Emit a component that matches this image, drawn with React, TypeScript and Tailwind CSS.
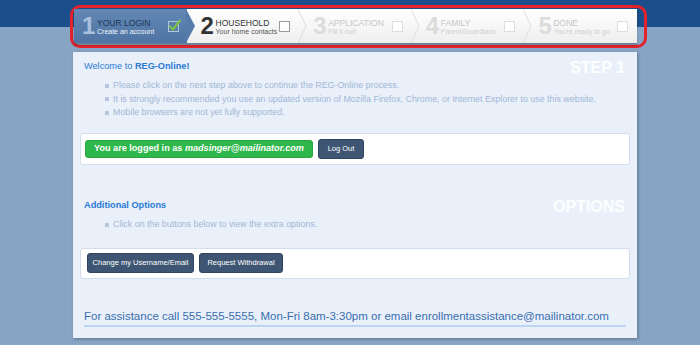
import React from 'react';

type Step = { n: string; title: string; sub: string; state: 'done' | 'current' | 'todo' };

const steps: Step[] = [
  { n: '1', title: 'YOUR LOGIN', sub: 'Create an account', state: 'done' },
  { n: '2', title: 'HOUSEHOLD', sub: 'Your home contacts', state: 'current' },
  { n: '3', title: 'APPLICATION', sub: 'Fill it out!', state: 'todo' },
  { n: '4', title: 'FAMILY', sub: 'Parent/Guardians', state: 'todo' },
  { n: '5', title: 'DONE', sub: "You're ready to go", state: 'todo' },
];

const CheckBox: React.FC<{ state: Step['state'] }> = ({ state }) => {
  if (state === 'done') {
    return (
      <svg width="14" height="14" viewBox="0 0 14 14" className="shrink-0 mr-[-3px]">
        <rect x="1.5" y="2.5" width="10" height="10" fill="none" stroke="#b7c7db" strokeWidth="1" />
        <path d="M3 7.5 L6 10.5 L13 1.5" fill="none" stroke="#7cc242" strokeWidth="2.2" strokeLinecap="round" strokeLinejoin="round" />
      </svg>
    );
  }
  return (
    <div
      className={`w-[11px] h-[11px] shrink-0 border bg-white ${
        state === 'current' ? 'border-[#9a9a9a]' : 'border-[#dedede]'
      }`}
    />
  );
};

const StepItem: React.FC<{ step: Step; first: boolean; last: boolean }> = ({ step, first, last }) => {
  const done = step.state === 'done';
  const todo = step.state === 'todo';
  return (
    <div
      className={`relative w-[112.6px] shrink-0 flex items-center h-full ${first ? 'pl-[8px] z-10' : 'pl-[14px]'} pr-[9px] ${
        done ? 'bg-[linear-gradient(to_bottom,#6388b5,#4f74a3)]' : ''
      }`}
    >
      <span
        className={`text-[24px] leading-none font-bold w-[15px] shrink-0 ${
          done ? 'text-[#a9c1df]' : todo ? 'text-[#dcdcdc]' : 'text-[#333333]'
        }`}
      >
        {step.n}
      </span>
      <div className="flex flex-col flex-1 min-w-0 pt-[1px]">
        <span
          className={`text-[8.5px] leading-[10px] whitespace-nowrap ${
            done ? 'text-[#1c3657]' : todo ? 'text-[#c6c6c6]' : 'text-[#333333]'
          }`}
        >
          {step.title}
        </span>
        <span
          className={`text-[7px] leading-[8px] whitespace-nowrap ${
            done ? 'text-[#eef3fa]' : todo ? 'text-[#cfcfcf]' : 'text-[#555555]'
          }`}
        >
          {step.sub}
        </span>
      </div>
      <CheckBox state={step.state} />
      {!last && (
        <svg
          width="10"
          height="34"
          viewBox="0 0 10 34"
          className="absolute top-0 right-[-9px] pointer-events-none"
        >
          {done ? (
            <path d="M0 0 L9 17 L0 34 Z" fill="#567bab" />
          ) : (
            <path d="M0 0 L8 17 L0 34" fill="none" stroke="#dcdcdc" strokeWidth="1" />
          )}
        </svg>
      )}
    </div>
  );
};

const Bullet: React.FC<{ children: React.ReactNode }> = ({ children }) => (
  <li className="flex items-center h-[13.5px]">
    <span className="w-[4px] h-[4px] bg-[#b4c5de] mr-[4px] shrink-0" />
    <span className="whitespace-nowrap">{children}</span>
  </li>
);

const DarkButton: React.FC<{ children: React.ReactNode; w: string }> = ({ children, w }) => (
  <button
    className={`${w} h-[20px] rounded-[3px] bg-[#3e5674] border border-[#2f445e] text-[7.5px] text-white flex items-center justify-center`}
  >
    {children}
  </button>
);

export default function App() {
  return (
    <div className="w-[700px] h-[345px] overflow-hidden bg-[linear-gradient(to_bottom,#1c4e8b_27px,#88a4c4_27px)] pt-[5px] font-['Liberation_Sans',Arial,sans-serif]">
      {/* step bar with red outline */}
      <div className="ml-[70px] w-[577px] h-[43px] border-[3px] border-[#e3222b] rounded-[10px] pt-[1px] pl-[1px]">
        <div className="w-[563px] h-[34px] flex bg-[linear-gradient(to_bottom,#ffffff,#eeeeee)] shadow-[0_2px_2px_rgba(0,0,0,0.25)]">
          {steps.map((s, i) => (
            <StepItem key={s.n} step={s} first={i === 0} last={i === steps.length - 1} />
          ))}
        </div>
      </div>

      {/* content panel */}
      <div className="mt-[4px] ml-[73px] w-[564px] h-[286px] bg-[#e9f0fa] shadow-[1px_1px_3px_rgba(0,0,0,0.3)] px-[7px] pt-[7px] flex flex-col">
        <div className="h-[18px] flex items-center justify-between pl-[4px] pr-[5px]">
          <div className="text-[9.2px] leading-[12px] text-[#2a7ad2] mb-[4px]">
            Welcome to <span className="font-bold">REG-Online!</span>
          </div>
          <div className="text-[16px] leading-[18px] font-bold text-white/90">STEP 1</div>
        </div>
        <ul className="pl-[25px] mt-[2px] text-[8.9px] text-[#a2b7d6]">
          <Bullet>Please click on the next step above to continue the REG-Online process.</Bullet>
          <Bullet>
            It is strongly recommended you use an updated version of Mozilla Firefox, Chrome, or Internet Explorer to use
            this website.
          </Bullet>
          <Bullet>Mobile browsers are not yet fully supported.</Bullet>
        </ul>

        <div className="mt-[13.5px] h-[32px] shrink-0 bg-white border border-[#d3deec] rounded-[3px] flex items-center pl-[4px] gap-[5px]">
          <div className="w-[228px] h-[18px] rounded-[3px] bg-[#2eb74a] border border-[#27a540] text-white text-[9.1px] font-bold flex items-center justify-center whitespace-nowrap">
            You are logged in as&nbsp;<span className="italic">madsinger@mailinator.com</span>
          </div>
          <DarkButton w="w-[46px]">Log Out</DarkButton>
        </div>

        <div className="h-[18px] flex items-center justify-between pl-[4px] pr-[5px] mt-[33px]">
          <div className="text-[9.2px] leading-[12px] font-bold text-[#2a7ad2] mb-[4px]">Additional Options</div>
          <div className="text-[16px] leading-[18px] font-bold text-white/90">OPTIONS</div>
        </div>
        <ul className="pl-[25px] mt-[2px] text-[8.9px] text-[#a2b7d6]">
          <Bullet>Click on the buttons below to view the extra options.</Bullet>
        </ul>

        <div className="mt-[16px] h-[31px] shrink-0 bg-white border border-[#d3deec] rounded-[3px] flex items-center pl-[6px] gap-[5px]">
          <DarkButton w="w-[107px]">Change my Username/Email</DarkButton>
          <DarkButton w="w-[84px]">Request Withdrawal</DarkButton>
        </div>

        <div className="mt-[30px] mx-[4px] pb-[2px] border-b-2 border-[#bcd6f2] text-[11.5px] leading-[14px] text-[#3b6eae] whitespace-nowrap">
          For assistance call 555-555-5555, Mon-Fri 8am-3:30pm or email enrollmentassistance@mailinator.com
        </div>
      </div>
    </div>
  );
}
